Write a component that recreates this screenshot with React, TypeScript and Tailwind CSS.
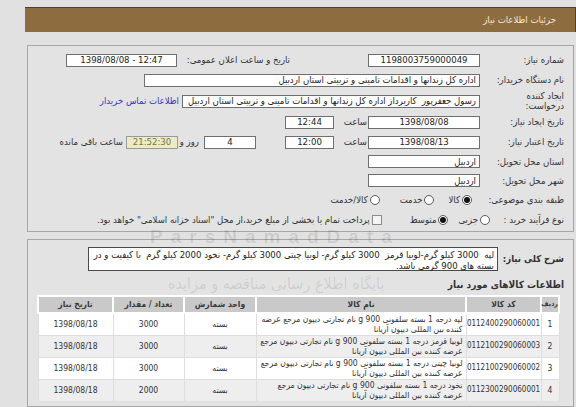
import React from 'react';

const font = "font-['DejaVu_Sans_Condensed','DejaVu_Sans',sans-serif]";

type BoxProps = { className: string; children?: React.ReactNode; center?: boolean };

const Box = ({ className, children, center }: BoxProps) => (
  <div
    className={`flex items-center h-[13px] bg-white border border-[#6f6f6f] px-[3px] text-[9.5px] leading-none text-[#222] whitespace-nowrap overflow-hidden ${
      center ? 'justify-center' : 'justify-start'
    } ${className}`}
  >
    {children}
  </div>
);

const Radio = ({ checked }: { checked?: boolean }) => (
  <span className="w-[10px] h-[10px] shrink-0 rounded-full border border-[#5a5a5a] bg-white flex items-center justify-center">
    {checked && <span className="w-[6px] h-[6px] rounded-full bg-[#111]" />}
  </span>
);

const Label = ({ className, children }: { className: string; children: React.ReactNode }) => (
  <div className={`shrink-0 text-[9.5px] leading-[10px] text-[#333] ${className}`}>{children}</div>
);

const rows = [
  {
    id: '1',
    code: '0112400290060001',
    name: 'لپه درجه 1 بسته سلفونی 900 g نام تجارتی دیپون مرجع عرضه کننده بین المللی دیپون آریانا',
    qty: '3000',
  },
  {
    id: '2',
    code: '0112100290060003',
    name: 'لوبیا قرمز درجه 1 بسته سلفونی 900 g نام تجارتی دیپون مرجع عرضه کننده بین المللی دیپون آریانا',
    qty: '3000',
  },
  {
    id: '3',
    code: '0112100290060002',
    name: 'لوبیا چیتی درجه 1 بسته سلفونی 900 g نام تجارتی دیپون مرجع عرضه کننده بین المللی دیپون آریانا',
    qty: '3000',
  },
  {
    id: '4',
    code: '0112300290060001',
    name: 'نخود درجه 1 بسته سلفونی 900 g نام تجارتی دیپون مرجع عرضه کننده بین المللی دیپون آریانا',
    qty: '2000',
  },
];

export default function App() {
  return (
    <div dir="rtl" className={`${font} relative w-[576px] h-[407px] overflow-hidden bg-[#e1e1e1] pt-[7px]`}>
      <div className="ml-[8px] w-[551px]">
        {/* header bar */}
        <div className="h-[25px] bg-[#8d6c3f] border-t border-r border-[#4d4030] flex items-center pr-[19px]">
          <span className="text-[9.5px] text-[#f3ead8]">جزئیات اطلاعات نیاز</span>
        </div>

        {/* main details panel */}
        <div className="mx-[2px] mt-[13px] border border-[#a6a6a6] bg-[#e3e3e3] pr-[9px] pt-[4px] pb-[2px]">
          <div className="flex items-center h-[20px]">
            <Label className="w-[84px]">شماره نیاز:</Label>
            <Box className="w-[112px]" center>1198003759000049</Box>
            <Label className="w-[191px] pr-[78px]">تاریخ و ساعت اعلان عمومی:</Label>
            <Box className="w-[111px]" center>
              <span dir="ltr">1398/08/08 - 12:47</span>
            </Box>
          </div>

          <div className="flex items-center h-[20px]">
            <Label className="w-[84px]">نام دستگاه خریدار:</Label>
            <Box className="w-[336px]">اداره کل زندانها و اقدامات تامینی و تربیتی استان اردبیل</Box>
          </div>

          <div className="flex items-center h-[22px]">
            <Label className="w-[84px]">
              ایجاد کننده
              <br />
              درخواست:
            </Label>
            <Box className="w-[298px]">رسول جعفرپور&nbsp; کاربرداز اداره کل زندانها و اقدامات تامینی و تربیتی استان اردبیل</Box>
            <span className="mr-[3px] text-[9.5px] text-[#3535c8]">اطلاعات تماس خریدار</span>
          </div>

          <div className="flex items-center h-[20px]">
            <Label className="w-[84px]">تاریخ ایجاد نیاز:</Label>
            <Box className="w-[112px]" center>1398/08/08</Box>
            <Label className="w-[34px] pr-[1px]">ساعت</Label>
            <Box className="w-[49px]" center>12:44</Box>
          </div>

          <div className="flex items-center h-[20px]">
            <Label className="w-[84px]">تاریخ اعتبار نیاز:</Label>
            <Box className="w-[112px]" center>1398/08/13</Box>
            <Label className="w-[34px] pr-[1px]">ساعت</Label>
            <Box className="w-[49px]" center>12:00</Box>
            <Box className="w-[52px] mr-[29px]" center>4</Box>
            <Label className="w-[26px] pr-[5px]">روز و</Label>
            <div className="h-[13px] w-[52px] flex items-center justify-center border border-[#9a9a9a] bg-[#ebebc5] text-[9.5px] leading-none text-[#77773f]">
              21:52:30
            </div>
            <Label className="pr-[3px]">ساعت باقی مانده</Label>
          </div>

          <div className="flex items-center h-[19px]">
            <Label className="w-[84px]">استان محل تحویل:</Label>
            <Box className="w-[112px]">اردبیل</Box>
          </div>

          <div className="flex items-center h-[19px]">
            <Label className="w-[84px]">شهر محل تحویل:</Label>
            <Box className="w-[112px]">اردبیل</Box>
          </div>

          <div className="flex items-center h-[20px] text-[9.5px] leading-[10px] text-[#333]">
            <Label className="w-[84px]">طبقه بندی موضوعی:</Label>
            <span className="mr-[8px]"><Radio checked /></span>
            <span className="mr-[2px]">کالا</span>
            <span className="mr-[14px]"><Radio /></span>
            <span className="mr-[2px]">خدمت</span>
            <span className="mr-[20px]"><Radio /></span>
            <span className="mr-[2px]">کالا/خدمت</span>
          </div>

          <div className="flex items-center h-[19px] text-[9.5px] leading-[10px] text-[#333]">
            <Label className="w-[74px]">نوع فرآیند خرید :</Label>
            <Radio />
            <span className="mr-[2px]">جزیی</span>
            <span className="mr-[10px]"><Radio checked /></span>
            <span className="mr-[2px]">متوسط</span>
            <span className="mr-[28px] w-[10px] h-[10px] border border-[#8a8a8a] bg-[#f4f4f4]" />
            <span className="mr-[2px] whitespace-nowrap">
              پرداخت تمام یا بخشی از مبلغ خرید،از محل "اسناد خزانه اسلامی" خواهد بود.
            </span>
          </div>
        </div>

        {/* description + goods panel */}
        <div className="mx-[2px] mt-[7px] border border-[#a6a6a6] bg-[#e3e3e3] pr-[9px] pt-[7px] pb-[4px]">
          <div className="flex items-center">
            <div className="w-[66px] shrink-0 whitespace-nowrap text-[9.5px] font-bold text-[#333]">شرح کلی نیاز:</div>
            <div className="w-[410px] h-[24px] bg-white border border-[#4a4a4a] px-[3px] pt-[1px] text-[9.5px] leading-[11px] text-[#222]">
              لپه&nbsp; 3000 کیلو گرم-لوبیا قرمز&nbsp; 3000 کیلو گرم- لوبیا چیتی 3000 کیلو گرم- نخود 2000 کیلو گرم&nbsp; با کیفیت و در
              بسته های 900 گرمی باشد.
            </div>
          </div>

          <div className="mt-[7px] h-[13px] whitespace-nowrap text-[10px] leading-[13px] font-bold text-[#333]">اطلاعات کالاهای مورد نیاز</div>

          <table className="mt-[4px] mr-[4px] w-[521px] table-fixed border-collapse text-[8.5px] text-[#333]">
            <colgroup>
              <col className="w-[18px]" />
              <col className="w-[75px]" />
              <col className="w-[210px]" />
              <col className="w-[72px]" />
              <col className="w-[71px]" />
              <col className="w-[75px]" />
            </colgroup>
            <thead>
              <tr className="h-[17px] bg-[#c9c9c9] text-[#3a3a3a]">
                <th className="border-2 border-white px-0 text-[7px] font-bold whitespace-nowrap">ردیف</th>
                <th className="border-2 border-white font-bold">کد کالا</th>
                <th className="border-2 border-white font-bold">نام کالا</th>
                <th className="border-2 border-white font-bold">واحد شمارش</th>
                <th className="border-2 border-white font-bold">تعداد / مقدار</th>
                <th className="border-2 border-white font-bold">تاریخ نیاز</th>
              </tr>
            </thead>
            <tbody>
              {rows.map((r, i) => (
                <tr key={r.id} className={`h-[22px] ${i % 2 === 0 ? 'bg-white' : 'bg-[#eeeeee]'}`}>
                  <td className="border border-[#dedede] text-center">{r.id}</td>
                  <td className="border border-[#dedede] text-center text-[8px]">{r.code}</td>
                  <td className="border border-[#dedede] px-[3px] py-0 leading-[10px] text-right">{r.name}</td>
                  <td className="border border-[#dedede] text-center">بسته</td>
                  <td className="border border-[#dedede] text-center">{r.qty}</td>
                  <td className="border border-[#dedede] text-center">1398/08/18</td>
                </tr>
              ))}
            </tbody>
          </table>
        </div>
      </div>

      {/* faint watermark over the page */}
      <div
        dir="ltr"
        className="pointer-events-none absolute left-[150px] top-[227px] text-[19px] leading-none font-bold tracking-[8px] text-black/10 font-['Liberation_Sans',sans-serif]"
      >
        ParsNamadData
      </div>
      <div className="pointer-events-none absolute left-[168px] top-[276px] text-[16px] leading-none text-black/10">
        پایگاه اطلاع رسانی مناقصه و مزایده
      </div>
    </div>
  );
}
